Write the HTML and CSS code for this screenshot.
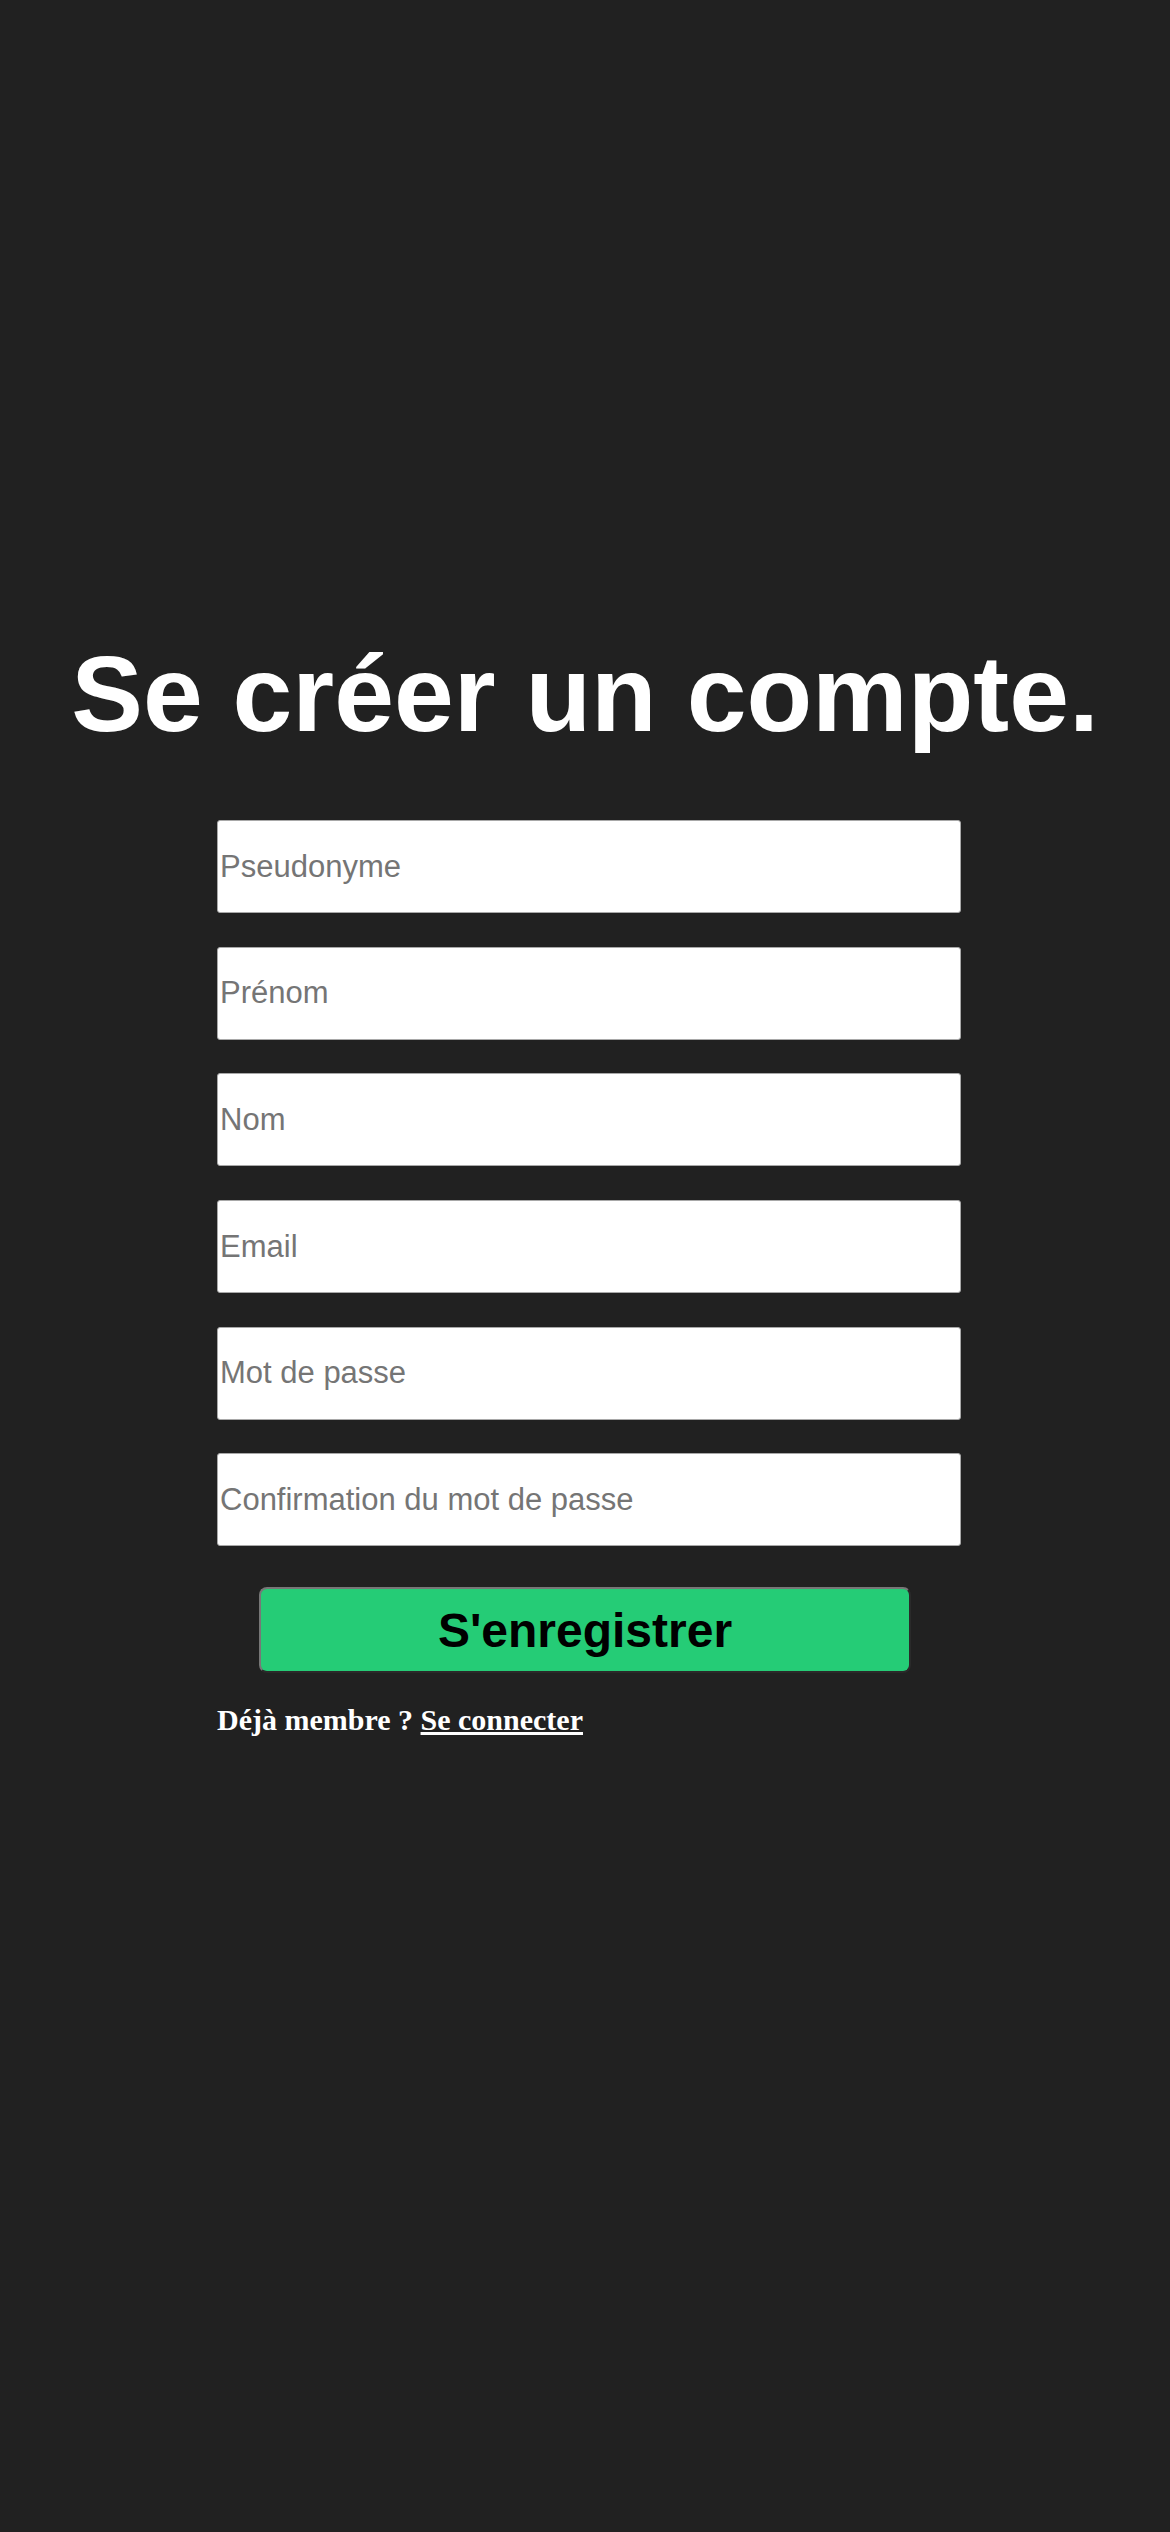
FILE: index.html
```html
<!DOCTYPE html>
<html lang="fr">
<head>
<meta charset="utf-8">
<title>Se créer un compte</title>
<link rel="stylesheet" href="styles.css">
</head>
<body>
<main class="page">
  <h1 class="title">Se créer un compte.</h1>
  <form class="form">
    <input class="field" type="text" placeholder="Pseudonyme">
    <input class="field" type="text" placeholder="Prénom">
    <input class="field" type="text" placeholder="Nom">
    <input class="field" type="email" placeholder="Email">
    <input class="field" type="password" placeholder="Mot de passe">
    <input class="field" type="password" placeholder="Confirmation du mot de passe">
    <button class="submit" type="button">S'enregistrer</button>
    <p class="member">Déjà membre ? <a class="login" href="#">Se connecter</a></p>
  </form>
</main>
</body>
</html>
```

FILE: styles.css
```css
html, body {
  margin: 0;
  padding: 0;
  background: #212121;
}

body {
  min-height: 2532px;
}

.page {
  display: flex;
  flex-direction: column;
  align-items: center;
  padding-top: 641px;
}

.title {
  margin: 0;
  font-family: "Liberation Sans", Arial, sans-serif;
  font-weight: bold;
  font-size: 107.5px;
  line-height: 107px;
  color: #ffffff;
  text-align: center;
  white-space: nowrap;
}

.form {
  margin-top: 72px;
  margin-left: 8px;
  width: 744px;
  display: flex;
  flex-direction: column;
  align-items: flex-start;
  gap: 33.7px;
}

.field {
  box-sizing: border-box;
  width: 744px;
  height: 93px;
  margin: 0;
  padding: 0 2px;
  border: 1px solid #a8a8a8;
  border-radius: 3px;
  background: #ffffff;
  font-family: "Liberation Sans", Arial, sans-serif;
  font-size: 31px;
  color: #000;
  outline: none;
}

.field::placeholder {
  color: #757575;
}

.submit {
  box-sizing: border-box;
  margin: 7px 0 0 42px;
  width: 652px;
  height: 86px;
  padding: 0;
  background: #25cc76;
  border-style: solid;
  border-width: 2px;
  border-color: #777777 #2a2a2a #2a2a2a #777777;
  border-radius: 8px;
  font-family: "Liberation Sans", Arial, sans-serif;
  font-weight: bold;
  font-size: 48px;
  color: #000000;
  cursor: pointer;
}

.member {
  margin: -4px 0 0 0;
  font-family: "Liberation Serif", "Times New Roman", serif;
  font-weight: bold;
  font-size: 30px;
  color: #ffffff;
}

.login {
  color: #ffffff;
  text-decoration: underline;
}
```
